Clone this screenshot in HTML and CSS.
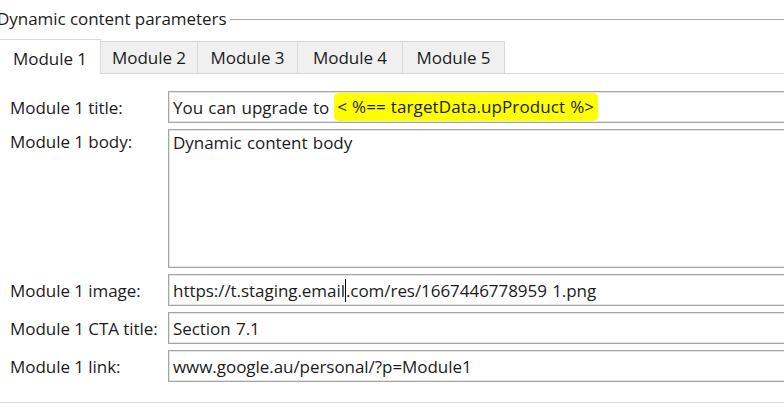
FILE: index.html
```html
<!DOCTYPE html>
<html>
<head>
<meta charset="utf-8">
<link rel="stylesheet" href="styles.css">
</head>
<body>
<div class="page">
  <div class="group-title">
    <span class="group-text">Dynamic content parameters</span>
    <span class="group-line"></span>
  </div>
  <div class="tabs">
    <div class="tab active">Module 1</div>
    <div class="tab">Module 2</div>
    <div class="tab">Module 3</div>
    <div class="tab">Module 4</div>
    <div class="tab">Module 5</div>
    <div class="tab-rest"></div>
  </div>
  <div class="form">
    <div class="label">Module 1 title:</div>
    <div class="field">You can upgrade to <span class="hl">&lt; %== targetData.upProduct %&gt;</span></div>
    <div class="label label-top">Module 1 body:</div>
    <div class="field area">Dynamic content body</div>
    <div class="label">Module 1 image:</div>
    <div class="field">https://t.staging.email<span class="caret"></span>.com/res/1667446778959 1.png</div>
    <div class="label">Module 1 CTA title:</div>
    <div class="field">Section 7.1</div>
    <div class="label">Module 1 link:</div>
    <div class="field">www.google.au/personal/?p=Module1</div>
  </div>
  <div class="bottom-line"></div>
</div>
</body>
</html>
```
FILE: styles.css
```css
html, body {
  margin: 0;
  padding: 0;
  background: #ffffff;
  overflow: hidden;
}
.page {
  width: 784px;
  height: 418px;
  font-family: "Open Sans", "Noto Sans", sans-serif;
  font-size: 17px;
  letter-spacing: -0.05px;
  color: #1b1b1b;
  overflow: hidden;
}
.group-title {
  display: flex;
  align-items: center;
  height: 22px;
  padding-top: 7px;
  margin-left: -3px;
}
.group-text {
  white-space: nowrap;
  padding-right: 3px;
}
.group-line {
  flex: 1;
  height: 1px;
  background: #a8a8a8;
  margin-top: 2px;
}
.tabs {
  display: flex;
  margin-top: 10px;
  height: 35px;
  align-items: flex-end;
}
.tab {
  height: 33px;
  box-sizing: border-box;
  display: flex;
  align-items: center;
  justify-content: center;
  background: #f0f0f0;
  border: 1px solid #d9d9d9;
  border-left: none;
  flex-shrink: 0;
}
.tab:nth-child(1) { width: 101px; }
.tab:nth-child(2) { width: 97px; }
.tab:nth-child(3) { width: 100px; }
.tab:nth-child(4) { width: 105px; }
.tab:nth-child(5) { width: 102px; }
.tab.active {
  height: 35px;
  background: #ffffff;
  border-bottom: none;
  padding-top: 2px;
}
.tab-rest {
  flex: 1;
  height: 1px;
  background: #d9d9d9;
}
.form {
  display: grid;
  grid-template-columns: 158px 630px;
  row-gap: 6px;
  padding-left: 10px;
  margin-top: 17px;
}
.label {
  height: 32px;
  display: flex;
  align-items: center;
  white-space: nowrap;
}
.label-top {
  align-items: flex-start;
  padding-top: 1px;
  box-sizing: border-box;
}
.field {
  height: 32px;
  box-sizing: border-box;
  border: 1px solid #a5a5a5;
  box-shadow: inset 0 0 0 1px #e4e4e4;
  padding: 0 4px;
  display: flex;
  align-items: center;
  white-space: nowrap;
  word-spacing: 1px;
}
.field.area {
  height: 139px;
  align-items: flex-start;
  padding-top: 1px;
}
.hl {
  background: #ffff00;
  border-radius: 5px;
  padding: 2px 4px 3px 3px;
  margin-left: 5px;
  word-spacing: 0.5px;
  letter-spacing: 0.1px;
}
.caret {
  display: inline-block;
  width: 1px;
  height: 23px;
  background: #000;
  vertical-align: middle;
}
.bottom-line {
  height: 1px;
  background: #dcdcdc;
  margin-top: 20px;
}
```
